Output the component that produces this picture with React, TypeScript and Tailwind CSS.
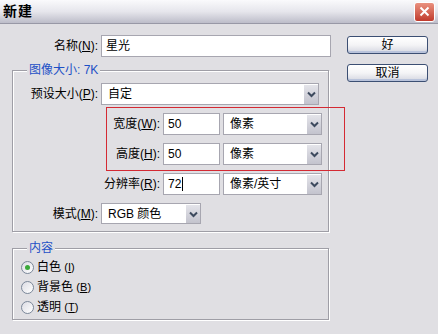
import React from 'react';

const font = { fontFamily: '"Liberation Sans", "Noto Sans CJK SC", sans-serif' };

function Label({ text, hot, width, after = '):' }: { text: string; hot: string; width: string; after?: string }) {
  return (
    <div className={`${width} shrink-0 text-right pr-[3px] text-[12px] text-black`}>
      {text}(<span className="underline">{hot}</span>{after}
    </div>
  );
}

function TextBox({ value, width, caret }: { value: string; width: string; caret?: boolean }) {
  return (
    <div className={`${width} h-[22px] shrink-0 bg-white border border-[#a7a6b0] flex items-center pl-[4px] text-[12px] text-black`}>
      {value}
      {caret && <span className="inline-block w-px h-[14px] bg-black ml-[1px]" />}
    </div>
  );
}

function Select({ value, width, height = 'h-[22px]' }: { value: string; width: string; height?: string }) {
  return (
    <div className={`${width} ${height} shrink-0 bg-white border border-[#a7a6b0] flex items-center text-[12px] text-black`}>
      <span className="flex-1 pl-[6px]">{value}</span>
      <span className="w-[15px] h-full border-l border-t border-white bg-gradient-to-b from-[#e4e4ea] to-[#c3c3cd] flex items-center justify-center">
        <svg width="9" height="7" viewBox="0 0 9 7">
          <path d="M1 1.5 L4.5 5 L8 1.5" stroke="#3d4a5e" strokeWidth="2" fill="none" />
        </svg>
      </span>
    </div>
  );
}

function Group({ title, className, children }: { title: string; className: string; children: React.ReactNode }) {
  return (
    <div className={`relative border border-[#9f9ea6] shadow-[1px_1px_0_#ffffff,inset_1px_1px_0_#ffffff] ${className}`}>
      <span className="absolute left-[14px] top-[-9px] px-[2px] bg-[#e0dfe3] text-[12px] leading-[16px] text-[#1d50c6]">
        {title}
      </span>
      {children}
    </div>
  );
}

function Radio({ checked, text, hot }: { checked?: boolean; text: string; hot: string }) {
  return (
    <div className="h-[20px] flex items-center gap-[3px] text-[12px] text-black">
      <span className="w-[13px] h-[13px] rounded-full border border-[#7b8799] bg-gradient-to-br from-[#dcdce4] to-white flex items-center justify-center">
        {checked && <span className="w-[5px] h-[5px] rounded-full bg-[#3aa93a]" />}
      </span>
      <span>
        {text} <span className="text-[11px]">(<span className="underline">{hot}</span>)</span>
      </span>
    </div>
  );
}

function Button({ text }: { text: string }) {
  return (
    <div className="w-[81px] h-[18px] rounded-[3px] border border-[#3c4f73] bg-gradient-to-b from-white via-[#f4f4f6] to-[#d4d6e0] shadow-[inset_0_-2px_0_#b9c3db] flex items-center justify-center text-[12px] text-black">
      {text}
    </div>
  );
}

export default function App() {
  return (
    <div className="w-[438px] h-[334px] bg-[#e0dfe3] overflow-hidden" style={font}>
      <div className="h-[24px] flex items-center justify-between pl-[3px] pr-[3px] bg-gradient-to-b from-[#fafafc] via-[#e6e6ec] to-[#bdbdc9] border-b border-[#9898a6]">
        <span className="text-[14px] font-bold text-black tracking-[1px]">新建</span>
        <span className="w-[21px] h-[20px] rounded-[3px] border border-white bg-gradient-to-b from-[#e9907f] to-[#c0392c] flex items-center justify-center">
          <svg width="11" height="11" viewBox="0 0 11 11">
            <path d="M1.5 1.5 L9.5 9.5 M9.5 1.5 L1.5 9.5" stroke="#ffffff" strokeWidth="2" />
          </svg>
        </span>
      </div>

      <div className="flex pt-[11px]">
        <div className="ml-[12px] w-[317px] shrink-0">
          <div className="flex items-center">
            <Label text="名称" hot="N" width="w-[89px]" />
            <TextBox value="星光" width="w-[230px]" />
          </div>

          <Group title="图像大小: 7K" className="mt-[13px] h-[162px] pt-[12px]">
            <div className="flex items-center">
              <Label text="预设大小" hot="P" width="w-[88px]" />
              <Select value="自定" width="w-[218px]" />
            </div>

            <div className="ml-[93px] mt-[2px] w-[239px] h-[64px] border border-[#d42a33] pt-[5px]">
              <div className="flex items-center">
                <Label text="宽度" hot="W" width="w-[56px]" />
                <TextBox value="50" width="w-[57px]" />
                <div className="w-[3px]" />
                <Select value="像素" width="w-[99px]" />
              </div>
              <div className="flex items-center mt-[8px]">
                <Label text="高度" hot="H" width="w-[56px]" />
                <TextBox value="50" width="w-[57px]" />
                <div className="w-[3px]" />
                <Select value="像素" width="w-[99px]" />
              </div>
            </div>

            <div className="flex items-center mt-[2px]">
              <Label text="分辨率" hot="R" width="w-[150px]" />
              <TextBox value="72" width="w-[57px]" caret />
              <div className="w-[3px]" />
              <Select value="像素/英寸" width="w-[99px]" />
            </div>

            <div className="flex items-center mt-[8px]">
              <Label text="模式" hot="M" width="w-[88px]" />
              <Select value="RGB 颜色" width="w-[100px]" height="h-[21px]" />
            </div>
          </Group>

          <Group title="内容" className="mt-[16px] h-[72px] pt-[8px] pl-[8px]">
            <Radio checked text="白色" hot="I" />
            <Radio text="背景色" hot="B" />
            <Radio text="透明" hot="T" />
          </Group>
        </div>

        <div className="ml-[18px] mt-[1px] flex flex-col gap-[10px]">
          <Button text="好" />
          <Button text="取消" />
        </div>
      </div>
    </div>
  );
}
